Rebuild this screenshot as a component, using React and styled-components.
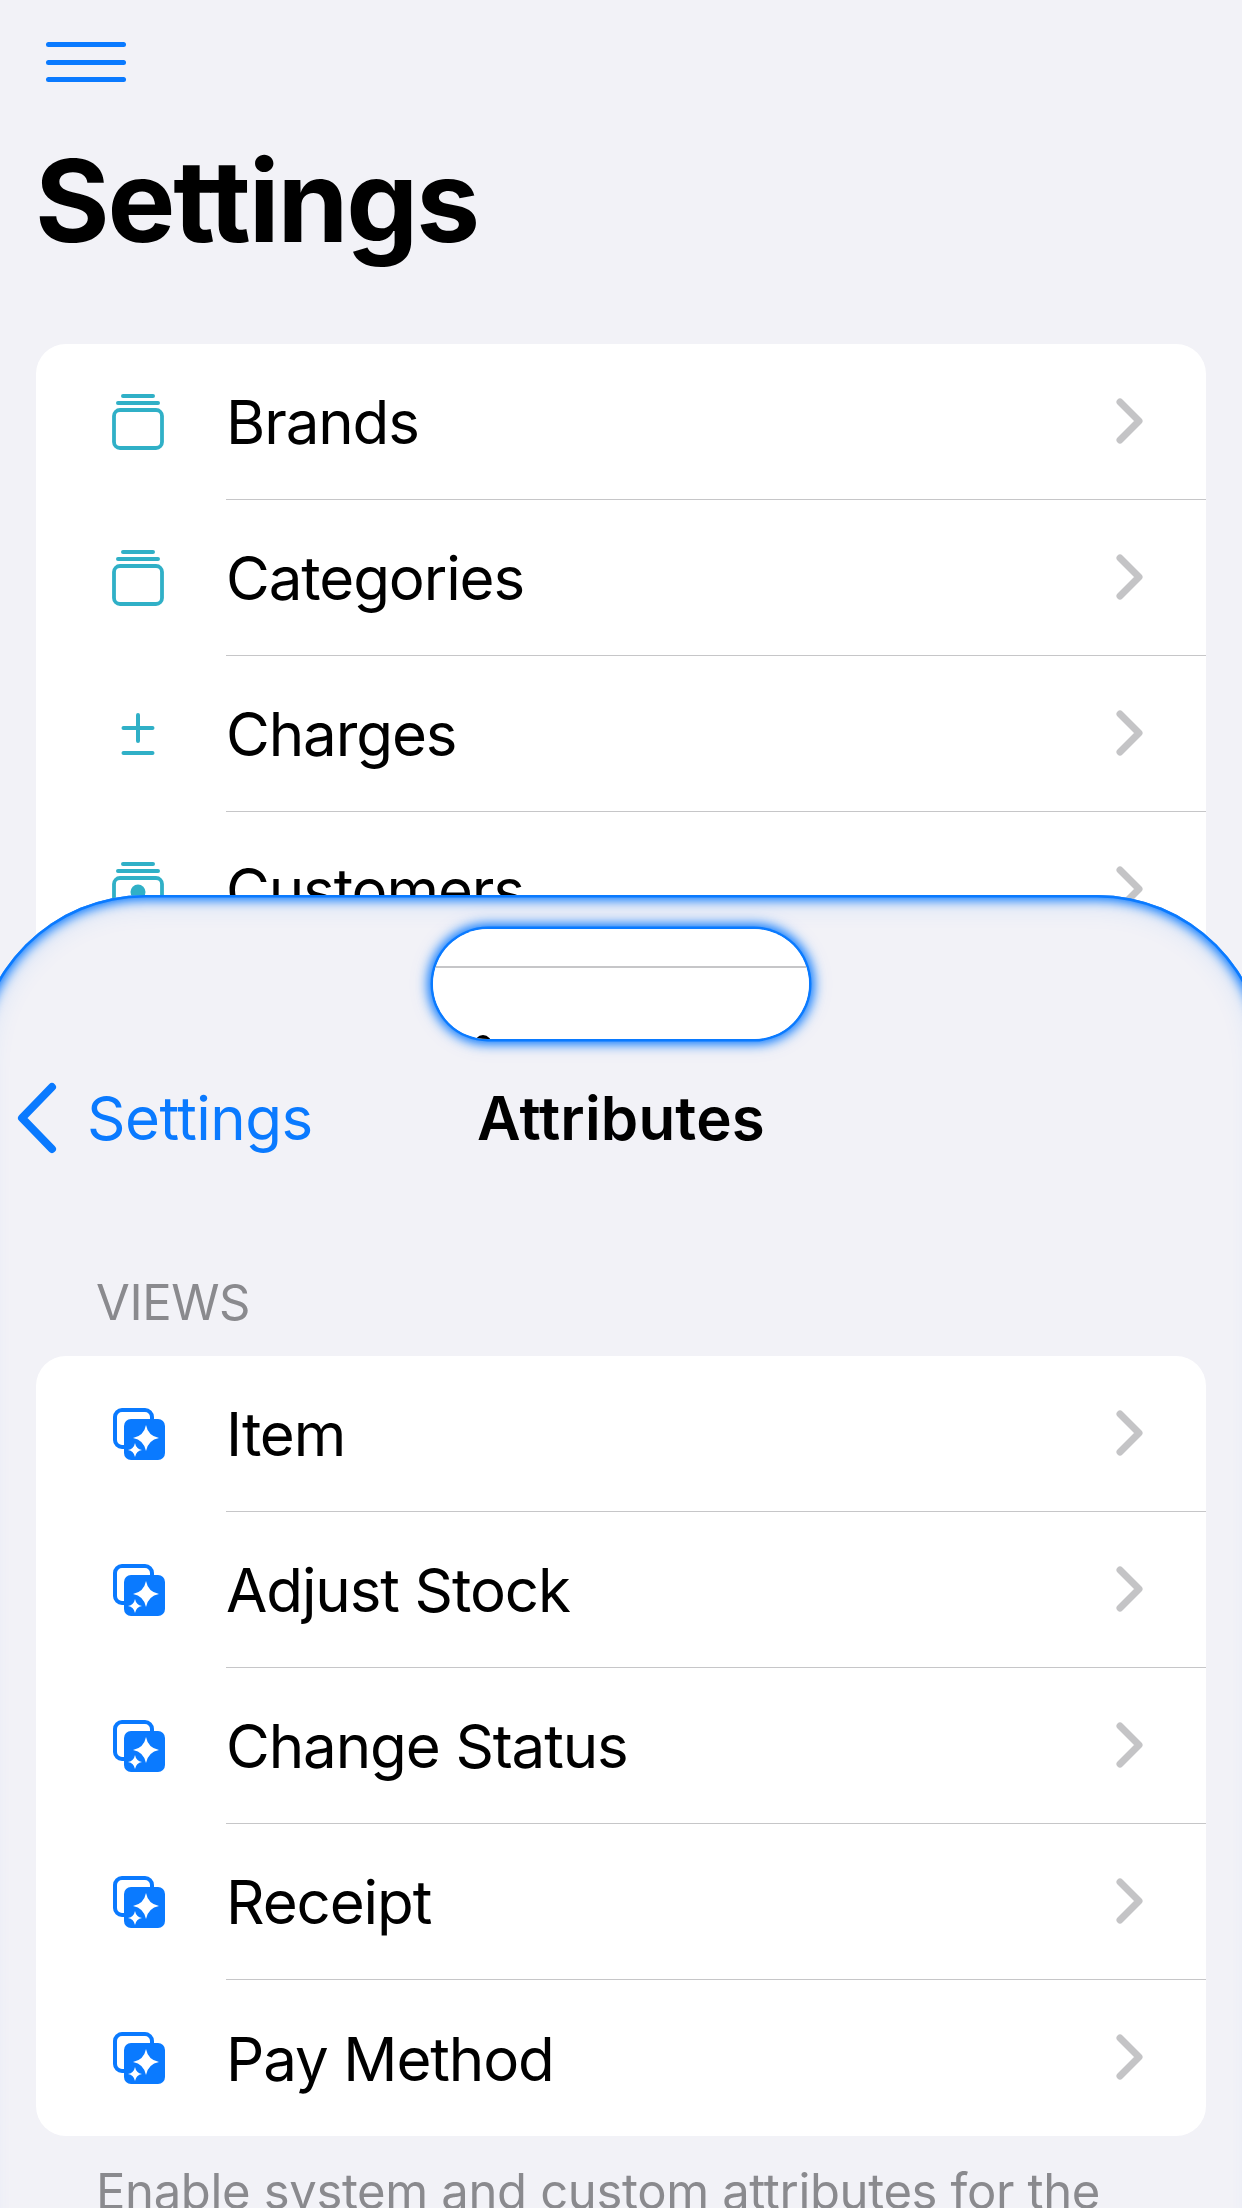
import React from "react";
import styled, { createGlobalStyle } from "styled-components";

const BLUE = "#0a7aff";
const TEAL = "#30b0c7";
const FONT = `Inter, "Liberation Sans", sans-serif`;

const Global = createGlobalStyle`
  html, body { margin: 0; padding: 0; background: #f2f2f7; }
  #root { width: 1242px; height: 2208px; }
`;

const Page = styled.div`
  position: relative;
  width: 1242px;
  height: 2208px;
  overflow: hidden;
  background: #f2f2f7;
  font-family: ${FONT};
  color: #000;
`;

const MenuButton = styled.div`
  display: flex;
  flex-direction: column;
  gap: 12.5px;
  width: 80px;
  padding: 42px 0 0 46px;
`;

const MenuLine = styled.span`
  display: block;
  height: 5px;
  border-radius: 3px;
  background: ${BLUE};
`;

const LargeTitle = styled.h1`
  margin: 52px 0 0 35px;
  font-size: 114px;
  line-height: 134px;
  font-weight: 700;
  letter-spacing: -2.1px;
`;

const Card = styled.section`
  margin: 0 36px;
  border-radius: 30px;
  background: #fff;
  overflow: hidden;
`;

const TopCard = styled(Card)`
  margin-top: 76px;
`;

const Row = styled.div`
  display: flex;
  align-items: center;
  height: 156px;
  padding-left: 74px;
`;

const IconSlot = styled.svg`
  flex: none;
  width: 58px;
  height: 62px;
  margin-right: 58px;
`;

const RowBody = styled.div`
  flex: 1;
  display: flex;
  align-items: center;
  justify-content: space-between;
  align-self: stretch;
  padding-right: 60px;
  border-bottom: ${(p) => (p.$last ? "none" : "1.5px solid #c6c6c8")};
`;

const RowLabel = styled.span`
  padding-top: 1px;
  font-size: 60px;
  line-height: 72px;
  font-weight: 400;
  letter-spacing: -1.1px;
`;

const Chevron = styled.svg`
  flex: none;
  width: 32px;
  height: 46px;
  margin-top: -2px;
`;

const Sheet = styled.div`
  position: absolute;
  top: 895px;
  left: -24px;
  right: -24px;
  bottom: -60px;
  padding: 183px 24px 0;
  border-radius: 169px 169px 0 0;
  background: #f2f2f7;
  box-shadow: inset 0 0 0 2.5px ${BLUE}, inset 0 0 11px 5px ${BLUE}, inset 0 0 28px 8px ${BLUE}24;
`;

const Pill = styled.div`
  position: absolute;
  top: 34px;
  left: 457px;
  width: 376px;
  height: 110px;
  border-radius: 55px;
  background: #fff;
  overflow: hidden;
`;

const PillGlow = styled.div`
  position: absolute;
  top: 34px;
  left: 457px;
  width: 376px;
  height: 110px;
  border-radius: 55px;
  box-shadow: 0 0 0 2.5px ${BLUE}, 0 0 11px 5px ${BLUE}, 0 0 20px 6px ${BLUE}20;
`;

const PillRule = styled.span`
  position: absolute;
  top: 37px;
  left: 0;
  right: 0;
  height: 1.5px;
  background: #c6c6c8;
`;

const PillSpeck = styled.span`
  position: absolute;
  left: 41px;
  top: 106px;
  width: 18px;
  height: 20px;
  border-radius: 50%;
  background: #000;
`;

const NavBar = styled.header`
  display: grid;
  grid-template-columns: 1fr auto 1fr;
  align-items: center;
  height: 80px;
`;

const BackLink = styled.div`
  display: flex;
  align-items: center;
  gap: 27px;
  padding-left: 16px;
  color: ${BLUE};
  font-size: 60px;
  line-height: 72px;
  letter-spacing: -0.5px;
`;

const BackIcon = styled.svg`
  flex: none;
  width: 44px;
  height: 74px;
`;

const NavTitle = styled.div`
  font-size: 60px;
  line-height: 72px;
  font-weight: 600;
  letter-spacing: 0.2px;
`;

const SectionLabel = styled.div`
  margin: 115px 0 0 96px;
  height: 83px;
  font-size: 49px;
  line-height: 60px;
  color: #8a8a8e;
  letter-spacing: -0.4px;
`;

const Footnote = styled.p`
  margin: 26px 96px 0;
  font-size: 49px;
  line-height: 60px;
  color: #8a8a8e;
  letter-spacing: -0.35px;
  white-space: nowrap;
`;

const Stack = ({ children }) => (
  <IconSlot viewBox="0 0 58 62" fill="none">
    <path d="M13 5h30M8 12h40" stroke={TEAL} strokeWidth="4" strokeLinecap="round" />
    <rect x="4" y="19" width="48" height="38" rx="6" stroke={TEAL} strokeWidth="3.8" />
    {children}
  </IconSlot>
);

const PlusMinus = () => (
  <IconSlot viewBox="0 0 58 62" fill="none">
    <path d="M28 12v26M13.500 25h29M13.500 50h29" stroke={TEAL} strokeWidth="4" strokeLinecap="round" />
  </IconSlot>
);

const star = (cx, cy, r) => {
  const k = r * 0.16;
  return `M${cx} ${cy - r}Q${cx + k} ${cy - k} ${cx + r} ${cy}Q${cx + k} ${cy + k} ${cx} ${cy + r}Q${cx - k} ${cy + k} ${cx - r} ${cy}Q${cx - k} ${cy - k} ${cx} ${cy - r}Z`;
};

const Sparkles = () => (
  <IconSlot viewBox="0 0 58 62" fill="none">
    <rect x="5" y="7" width="37" height="37" rx="7" stroke={BLUE} strokeWidth="4" />
    <rect x="14" y="16" width="41" height="41" rx="7" fill={BLUE} />
    <path d={star(36, 35, 13)} fill="#fff" />
    <path d={star(25, 47, 7)} fill="#fff" />
  </IconSlot>
);

const ChevronRight = () => (
  <Chevron viewBox="0 0 32 46" fill="none">
    <path d="M6 4l19 19L6 42" stroke="#c4c4c6" strokeWidth="7" strokeLinecap="round" strokeLinejoin="round" />
  </Chevron>
);

const ListRow = ({ icon, label, last }) => (
  <Row>
    {icon}
    <RowBody $last={last}>
      <RowLabel>{label}</RowLabel>
      <ChevronRight />
    </RowBody>
  </Row>
);

const settingsRows = [
  { label: "Brands", icon: <Stack /> },
  { label: "Categories", icon: <Stack /> },
  { label: "Charges", icon: <PlusMinus /> },
  { label: "Customers", icon: <Stack><circle cx="28" cy="33" r="7.500" fill={TEAL} /></Stack> },
];

const viewRows = ["Item", "Adjust Stock", "Change Status", "Receipt", "Pay Method"];

export default function App() {
  return (
    <Page>
      <Global />
      <MenuButton>
        <MenuLine />
        <MenuLine />
        <MenuLine />
      </MenuButton>
      <LargeTitle>Settings</LargeTitle>
      <TopCard>
        {settingsRows.map((r) => (
          <ListRow key={r.label} label={r.label} icon={r.icon} />
        ))}
      </TopCard>

      <Sheet>
        <PillGlow />
        <Pill>
          <PillRule />
          <PillSpeck />
        </Pill>
        <NavBar>
          <BackLink>
            <BackIcon viewBox="0 0 44 74" fill="none">
              <path d="M36 6L6 37l30 31" stroke={BLUE} strokeWidth="8" strokeLinecap="round" strokeLinejoin="round" />
            </BackIcon>
            Settings
          </BackLink>
          <NavTitle>Attributes</NavTitle>
          <div />
        </NavBar>
        <SectionLabel>VIEWS</SectionLabel>
        <Card>
          {viewRows.map((label, i) => (
            <ListRow key={label} label={label} icon={<Sparkles />} last={i === viewRows.length - 1} />
          ))}
        </Card>
        <Footnote>Enable system and custom attributes for the</Footnote>
      </Sheet>
    </Page>
  );
}
